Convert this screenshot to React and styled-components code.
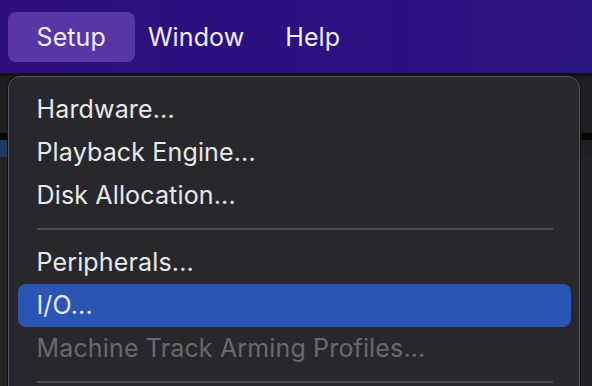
import React from 'react'
import styled, { createGlobalStyle } from 'styled-components'

const GlobalStyle = createGlobalStyle`
  html, body {
    margin: 0;
    padding: 0;
    background: #1d1d1f;
    overflow: hidden;
  }
  body {
    font-family: Inter, "Liberation Sans", sans-serif;
    -webkit-font-smoothing: antialiased;
  }
`

const Screen = styled.div`
  position: relative;
  width: 592px;
  height: 386px;
  overflow: hidden;
  background: #1d1d1f;
`

const MenuBar = styled.div`
  display: flex;
  align-items: center;
  height: 73px;
  padding-left: 15.5px;
  background: linear-gradient(90deg, #2f0f7e 0%, #2c1180 60%, #2a1480 100%);
  border-bottom: 3px solid #131315;
`

const MenuTitle = styled.div`
  height: 50px;
  line-height: 50px;
  padding: ${p => (p.$active ? '0 29px' : '0 20.5px')};
  margin: ${p => (p.$active ? '0 -7.5px 0 -8px' : '0')};
  border-radius: 8px;
  background: ${p => (p.$active ? '#5836a6' : 'transparent')};
  color: #f1eff7;
  font-size: 25px;
  letter-spacing: 0.1px;
`

const Backdrop = styled.div`
  display: flex;
  flex-direction: column;
`

const BackRow = styled.div`
  display: flex;
  height: ${p => p.$h}px;
  background: ${p => p.$bg};
`

const TrackEdge = styled.div`
  width: 8px;
  background: ${p => p.$bg};
`

const Dropdown = styled.div`
  position: absolute;
  top: 76px;
  left: 8px;
  width: 572px;
  height: 340px;
  box-sizing: border-box;
  padding: 11px 8.5px;
  background: #28272c;
  border: 1.5px solid #58575d;
  border-radius: 12px;
  box-shadow: 0 0 0 1px #111;
  display: flex;
  flex-direction: column;
`

const Item = styled.div`
  height: 43px;
  line-height: 43px;
  padding: 0 19px;
  border-radius: 8px;
  font-size: 25px;
  letter-spacing: 0.15px;
  white-space: nowrap;
  color: ${p => (p.$disabled ? '#6a696e' : '#e9e8ec')};
  background: ${p => (p.$selected ? '#2a55b4' : 'transparent')};
`

const Separator = styled.div`
  height: 24px;
  display: flex;
  align-items: center;
  padding: 0 18px 0 19px;

  &::after {
    content: '';
    flex: 1;
    height: 2px;
    background: #4a494e;
  }
`

const App = () => (
  <Screen>
    <GlobalStyle />
    <MenuBar>
      <MenuTitle $active>Setup</MenuTitle>
      <MenuTitle>Window</MenuTitle>
      <MenuTitle>Help</MenuTitle>
    </MenuBar>
    <Backdrop>
      <BackRow $h={57} $bg="#1e1e20" />
      <BackRow $h={7} $bg="#060606" />
      <BackRow $h={17} $bg="#1f1f21">
        <TrackEdge $bg="#1f3a66" />
      </BackRow>
      <BackRow $h={240} $bg="#232325" />
    </Backdrop>
    <Dropdown>
      <Item>Hardware...</Item>
      <Item>Playback Engine...</Item>
      <Item>Disk Allocation...</Item>
      <Separator />
      <Item>Peripherals...</Item>
      <Item $selected>I/O...</Item>
      <Item $disabled>Machine Track Arming Profiles...</Item>
      <Separator />
    </Dropdown>
  </Screen>
)

export default App
